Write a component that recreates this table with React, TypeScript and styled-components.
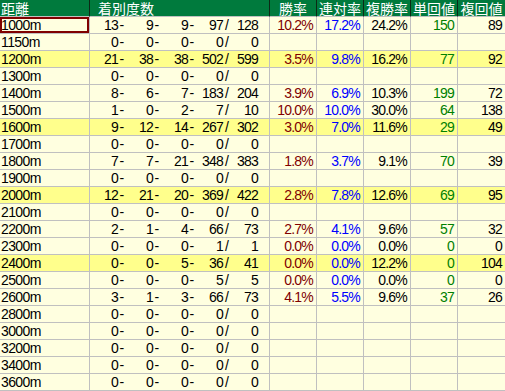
import React from 'react';
import styled, { createGlobalStyle } from 'styled-components';

const GlobalStyle = createGlobalStyle`
  html, body {
    margin: 0;
    padding: 0;
    background: #ffffff;
  }
`;

type Row = {
  dist: string;
  counts: number[];
  win?: string;
  place2?: string;
  place3?: string;
  tan?: string;
  fuku?: string;
  highlight?: boolean;
  selected?: boolean;
};

const rows: Row[] = [
  { dist: '1000m', counts: [13, 9, 9, 97, 128], win: '10.2%', place2: '17.2%', place3: '24.2%', tan: '150', fuku: '89', selected: true },
  { dist: '1150m', counts: [0, 0, 0, 0, 0] },
  { dist: '1200m', counts: [21, 38, 38, 502, 599], win: '3.5%', place2: '9.8%', place3: '16.2%', tan: '77', fuku: '92', highlight: true },
  { dist: '1300m', counts: [0, 0, 0, 0, 0] },
  { dist: '1400m', counts: [8, 6, 7, 183, 204], win: '3.9%', place2: '6.9%', place3: '10.3%', tan: '199', fuku: '72' },
  { dist: '1500m', counts: [1, 0, 2, 7, 10], win: '10.0%', place2: '10.0%', place3: '30.0%', tan: '64', fuku: '138' },
  { dist: '1600m', counts: [9, 12, 14, 267, 302], win: '3.0%', place2: '7.0%', place3: '11.6%', tan: '29', fuku: '49', highlight: true },
  { dist: '1700m', counts: [0, 0, 0, 0, 0] },
  { dist: '1800m', counts: [7, 7, 21, 348, 383], win: '1.8%', place2: '3.7%', place3: '9.1%', tan: '70', fuku: '39' },
  { dist: '1900m', counts: [0, 0, 0, 0, 0] },
  { dist: '2000m', counts: [12, 21, 20, 369, 422], win: '2.8%', place2: '7.8%', place3: '12.6%', tan: '69', fuku: '95', highlight: true },
  { dist: '2100m', counts: [0, 0, 0, 0, 0] },
  { dist: '2200m', counts: [2, 1, 4, 66, 73], win: '2.7%', place2: '4.1%', place3: '9.6%', tan: '57', fuku: '32' },
  { dist: '2300m', counts: [0, 0, 0, 1, 1], win: '0.0%', place2: '0.0%', place3: '0.0%', tan: '0', fuku: '0' },
  { dist: '2400m', counts: [0, 0, 5, 36, 41], win: '0.0%', place2: '0.0%', place3: '12.2%', tan: '0', fuku: '104', highlight: true },
  { dist: '2500m', counts: [0, 0, 0, 5, 5], win: '0.0%', place2: '0.0%', place3: '0.0%', tan: '0', fuku: '0' },
  { dist: '2600m', counts: [3, 1, 3, 66, 73], win: '4.1%', place2: '5.5%', place3: '9.6%', tan: '37', fuku: '26' },
  { dist: '2800m', counts: [0, 0, 0, 0, 0] },
  { dist: '3000m', counts: [0, 0, 0, 0, 0] },
  { dist: '3200m', counts: [0, 0, 0, 0, 0] },
  { dist: '3400m', counts: [0, 0, 0, 0, 0] },
  { dist: '3600m', counts: [0, 0, 0, 0, 0] },
];

const colWidths = [90, 180, 47, 47, 47, 47, 47];

const Table = styled.table`
  width: 505px;
  table-layout: fixed;
  border-collapse: separate;
  border-spacing: 0;
  font-family: 'Liberation Sans', 'Noto Sans CJK JP', sans-serif;
  font-size: 14px;
  color: #000000;
`;

const Col = styled.col<{ $w: number }>`
  width: ${(p) => p.$w}px;
`;

const Th = styled.th<{ $align?: 'left' | 'center'; $pad?: number }>`
  box-sizing: border-box;
  height: 17px;
  padding: 0 0 0 ${(p) => p.$pad ?? 0}px;
  line-height: 16px;
  background-color: #007a3d;
  color: #ffffff;
  font-family: 'Noto Sans CJK JP', sans-serif;
  font-size: 14px;
  font-weight: normal;
  text-align: ${(p) => p.$align ?? 'center'};
  vertical-align: middle;
  border-right: 1px solid #0c2a16;
  border-bottom: 1px solid #c0c0c0;
  white-space: nowrap;

  &:last-child {
    border-right: none;
  }
`;

const Tr = styled.tr<{ $highlight?: boolean }>`
  background-color: ${(p) => (p.$highlight ? '#ffff8c' : '#ffffe0')};
`;

const Td = styled.td<{ $color?: string; $selected?: boolean }>`
  box-sizing: border-box;
  height: 17px;
  padding: 0 3px 0 0;
  line-height: 16px;
  text-align: right;
  vertical-align: middle;
  color: ${(p) => p.$color ?? '#000000'};
  border-right: 1px solid #c0c0c0;
  border-bottom: 1px solid #c0c0c0;
  white-space: nowrap;
  letter-spacing: -0.8px;

  &:last-child {
    border-right: none;
  }
`;

const DistCell = styled(Td)`
  text-align: left;
  padding: 0 0 0 1px;
  letter-spacing: -0.6px;
  box-shadow: ${(p) => (p.$selected ? 'inset 0 0 0 2px #800000' : 'none')};
`;

const Counts = styled.div`
  display: flex;
  width: 168px;
`;

const Field = styled.span`
  width: 28px;
  text-align: right;
`;

const Sep = styled.span`
  width: 7px;
  text-align: center;
`;

const CountCell: React.FC<{ counts: number[] }> = ({ counts }) => (
  <Td>
    <Counts>
      {counts.map((n, i) => (
        <React.Fragment key={i}>
          <Field>{n}</Field>
          {i < 3 && <Sep>-</Sep>}
          {i === 3 && <Sep>/</Sep>}
        </React.Fragment>
      ))}
    </Counts>
  </Td>
);

const App: React.FC = () => {
  return (
    <>
      <GlobalStyle />
      <Table>
        <colgroup>
          {colWidths.map((w, i) => (
            <Col key={i} $w={w} />
          ))}
        </colgroup>
        <thead>
          <tr>
            <Th $align="left" $pad={1}>距離</Th>
            <Th $align="left" $pad={8}>着別度数</Th>
            <Th>勝率</Th>
            <Th>連対率</Th>
            <Th>複勝率</Th>
            <Th>単回値</Th>
            <Th>複回値</Th>
          </tr>
        </thead>
        <tbody>
          {rows.map((r) => (
            <Tr key={r.dist} $highlight={r.highlight}>
              <DistCell $selected={r.selected}>{r.dist}</DistCell>
              <CountCell counts={r.counts} />
              <Td $color="#800000">{r.win}</Td>
              <Td $color="#0000ff">{r.place2}</Td>
              <Td>{r.place3}</Td>
              <Td $color="#008000">{r.tan}</Td>
              <Td>{r.fuku}</Td>
            </Tr>
          ))}
        </tbody>
      </Table>
    </>
  );
};

export default App;
